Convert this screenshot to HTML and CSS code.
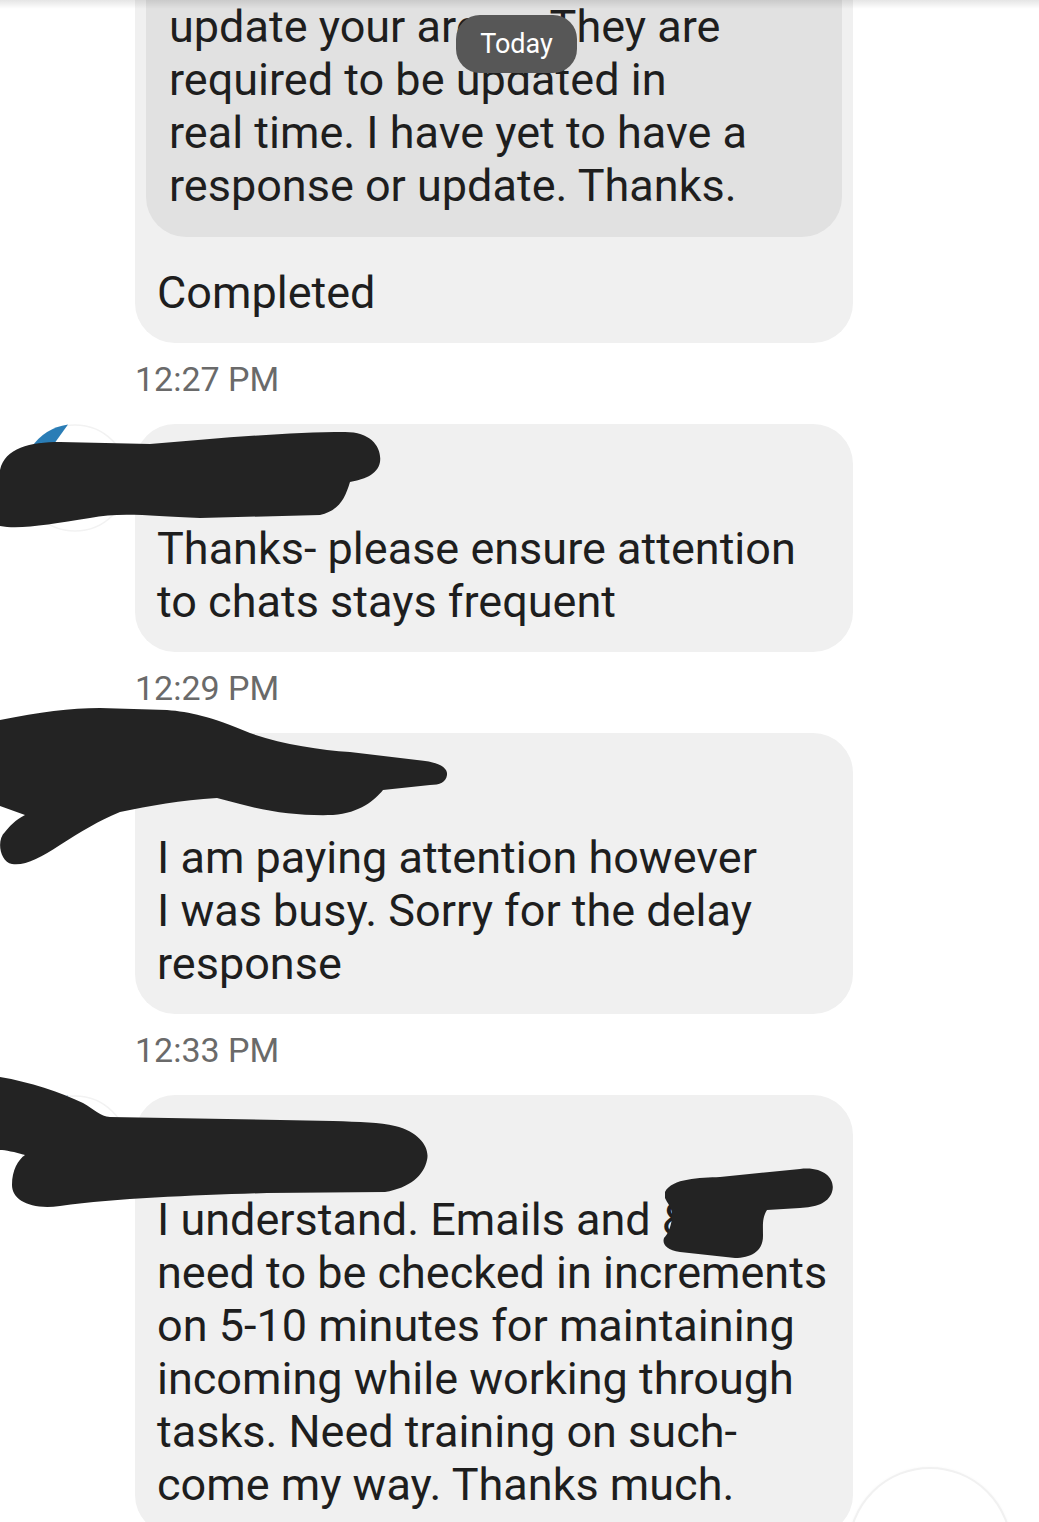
FILE: index.html
```html
<!DOCTYPE html>
<html lang="en">
<head>
    <meta charset="UTF-8">
    <meta name="viewport" content="width=device-width, initial-scale=1.0">
    <title>Chat</title>
    <link rel="stylesheet" href="styles.css">
</head>
<body>
    <div class="screen">
        <div class="thread">
            <div class="msg">
                <div class="gutter"></div>
                <div class="body">
                    <div class="bubble">
                        <div class="quote">update your areas. They are<br>required to be updated in<br>real time. I have yet to have a<br>response or update. Thanks.</div>
                        <div class="reply">Completed</div>
                    </div>
                    <div class="time">12:27 PM</div>
                </div>
            </div>

            <div class="msg">
                <div class="gutter">
                    <svg class="avatar" viewBox="0 0 108 108">
                        <circle cx="54" cy="54" r="53" fill="#fff" stroke="#f2f2f2" stroke-width="1.5"/>
                        <path d="M10 24 A 54 54 0 0 1 47 0.5 L 33 20 L 18 40 Z" fill="#2a7db6"/>
                    </svg>
                </div>
                <div class="body">
                    <div class="bubble">
                        <div class="sender"></div>
                        <div class="text">Thanks- please ensure attention<br>to chats stays frequent</div>
                    </div>
                    <div class="time">12:29 PM</div>
                </div>
                <svg class="redact" style="top:1px" width="390" height="110" viewBox="0 425 390 110">
                    <path d="M0 470 C 5 448, 30 442, 60 442 L 150 444 C 220 438, 290 432, 345 432 C 372 432, 382 448, 380 462 C 378 475, 362 480, 350 482 C 345 498, 340 510, 320 515 L 200 518 C 150 516, 120 512, 90 518 C 50 524, 20 530, 0 526 Z"/>
                </svg>
            </div>

            <div class="msg">
                <div class="gutter"></div>
                <div class="body">
                    <div class="bubble">
                        <div class="sender"></div>
                        <div class="text">I am paying attention however<br>I was busy. Sorry for the delay<br>response</div>
                    </div>
                    <div class="time">12:33 PM</div>
                </div>
                <svg class="redact" style="top:-33px" width="460" height="170" viewBox="0 700 460 170">
                    <path d="M0 720 C 40 712, 70 708, 100 708 L 167 710 C 190 712, 210 716, 250 733 C 280 744, 320 750, 350 752 L 417 760 C 440 762, 448 768, 447 775 C 446 782, 440 785, 430 785 L 383 790 C 375 800, 360 813, 333 815 C 300 816, 270 812, 240 804 L 217 798 C 180 800, 150 806, 120 812 C 100 820, 80 832, 60 845 C 40 858, 25 866, 12 864 C 0 862, -4 840, 5 832 C 10 826, 15 820, 25 815 L 0 806 Z"/>
                </svg>
            </div>

            <div class="msg">
                <div class="gutter">
                    <svg class="avatar" viewBox="0 0 108 108">
                        <circle cx="54" cy="54" r="53" fill="#fff" stroke="#f2f2f2" stroke-width="1.5"/>
                        <path d="M10 24 A 54 54 0 0 1 47 0.5 L 33 20 L 18 40 Z" fill="#2a7db6"/>
                    </svg>
                </div>
                <div class="body">
                    <div class="bubble">
                        <div class="sender"></div>
                        <div class="text">I understand. Emails and &amp;<br>need to be checked in increments<br>on 5-10 minutes for maintaining<br>incoming while working through<br>tasks. Need training on such-<br>come my way. Thanks much.</div>
                    </div>
                </div>
                <svg class="redact" style="top:-25px" width="440" height="145" viewBox="0 1070 440 145">
                    <path d="M0 1077 C 30 1082, 60 1092, 83 1103 C 95 1110, 100 1116, 110 1117 L 333 1121 C 360 1122, 380 1122, 395 1126 C 420 1132, 430 1148, 427 1160 C 424 1175, 410 1188, 385 1192 L 267 1193 C 200 1195, 120 1198, 60 1206 C 30 1210, 12 1200, 12 1185 C 12 1170, 18 1160, 25 1155 C 15 1152, 5 1150, 0 1150 Z"/>
                </svg>
                <svg class="redact" style="top:65px; left:650px" width="190" height="105" viewBox="650 1160 190 105">
                    <path d="M665 1192 C 672 1178, 700 1178, 720 1177 L 800 1169 C 825 1166, 836 1180, 832 1192 C 828 1204, 815 1207, 800 1208 L 767 1210 C 762 1218, 763 1225, 763 1236 C 763 1252, 750 1258, 735 1258 L 680 1252 C 666 1250, 662 1244, 664 1238 C 668 1234, 672 1225, 672 1215 C 672 1207, 667 1203, 665 1198 Z"/>
                </svg>
            </div>
        </div>

        <div class="bar-shadow"></div>
        <div class="date-chip">Today</div>
        <div class="scroll-btn"></div>
    </div>
</body>
</html>
```

FILE: styles.css
```css
body {
    margin: 0;
    background-color: #fff;
    font-family: Roboto, "Noto Sans", Arial, sans-serif;
    color: #1e1e1e;
}
.screen {
    position: relative;
    width: 1039px;
    height: 1522px;
    overflow: hidden;
    background-color: #fff;
}
.thread {
    margin-top: -71px;
}
.msg {
    position: relative;
    display: flex;
}
.gutter {
    width: 135px;
    flex-shrink: 0;
}
.avatar {
    display: block;
    width: 108px;
    height: 108px;
    margin-left: 21px;
}
.body {
    width: 718px;
}
.bubble {
    background-color: #f0f0f0;
    border-radius: 40px;
    padding: 24px 22px;
    font-size: 45px;
    line-height: 53px;
}
.bubble:has(.quote) {
    padding: 11px 11px 24px;
}
.quote {
    background-color: #e1e1e1;
    border-radius: 40px;
    padding: 60px 23px 25px;
}
.reply {
    margin-top: 29px;
    padding-left: 11px;
}
.sender {
    height: 74px;
}
.time {
    margin: 16px 0 25px 0;
    font-size: 34px;
    line-height: 40px;
    color: #6a6a6a;
}
.redact {
    position: absolute;
    left: 0;
    fill: #232323;
}
.bar-shadow {
    position: absolute;
    top: 0;
    left: 0;
    right: 0;
    height: 9px;
    background: linear-gradient(rgba(0,0,0,0.1), rgba(0,0,0,0));
}
.date-chip {
    position: absolute;
    top: 15px;
    left: 456px;
    width: 121px;
    height: 58px;
    border-radius: 24px;
    background-color: #575757;
    color: #fff;
    font-size: 27px;
    line-height: 58px;
    text-align: center;
}
.scroll-btn {
    position: absolute;
    top: 1467px;
    left: 848px;
    width: 160px;
    height: 160px;
    border-radius: 50%;
    border: 2px solid #f1f1f1;
    background-color: #fff;
    box-shadow: 0 0 3px rgba(0,0,0,0.03);
}
```
